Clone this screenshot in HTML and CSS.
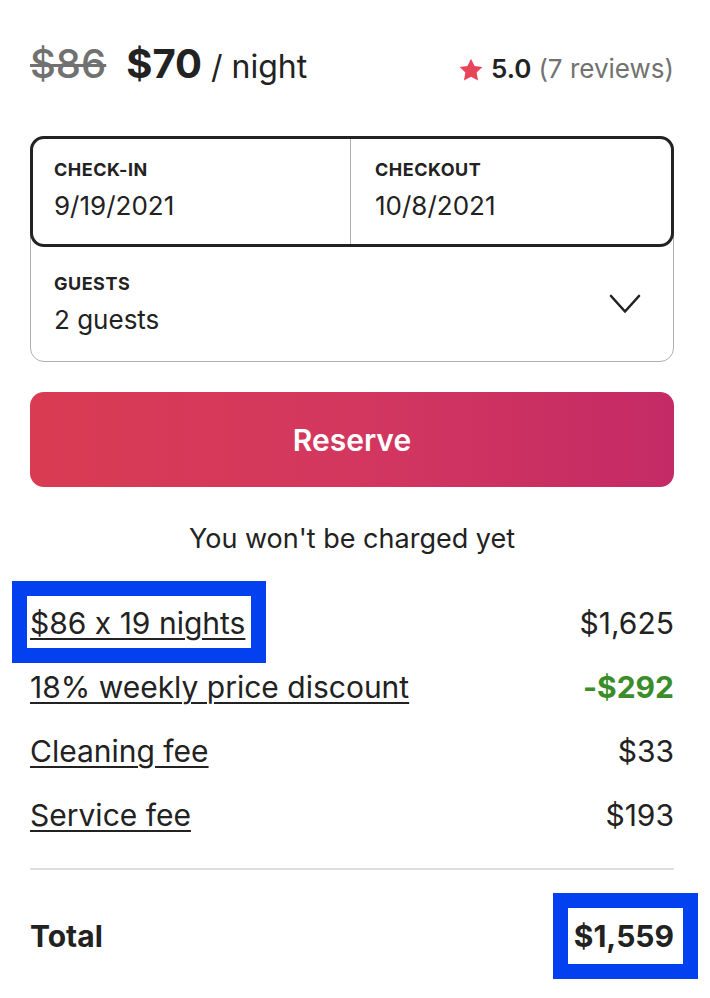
FILE: index.html
```html
<!DOCTYPE html>
<html lang="en">
<head>
<meta charset="utf-8">
<title>Booking</title>
<link rel="stylesheet" href="styles.css">
</head>
<body>
<div class="card">
  <div class="head">
    <div class="price">
      <span class="old">$86</span>
      <span class="now">$70</span>
      <span class="per">/ night</span>
    </div>
    <div class="rating">
      <svg class="star" viewBox="0 0 32 32" width="26" height="26" aria-hidden="true"><path d="M16 2l4.3 9 9.7 1.3-7.1 6.8 1.8 9.7L16 24.2l-8.7 4.6 1.8-9.7L2 12.3l9.7-1.3z" fill="#e8455a"/></svg>
      <span class="score">5.0</span>
      <span class="reviews">(7 reviews)</span>
    </div>
  </div>

  <div class="picker">
    <div class="dates">
      <div class="field">
        <div class="label">CHECK-IN</div>
        <div class="value">9/19/2021</div>
      </div>
      <div class="field field-right">
        <div class="label">CHECKOUT</div>
        <div class="value">10/8/2021</div>
      </div>
    </div>
    <div class="guests">
      <div class="field">
        <div class="label">GUESTS</div>
        <div class="value">2 guests</div>
      </div>
      <svg class="chev" viewBox="0 0 32 20" width="32" height="20" aria-hidden="true"><path d="M2 2l14 15.5L30 2" fill="none" stroke="#222" stroke-width="2.6" stroke-linecap="round" stroke-linejoin="round"/></svg>
    </div>
  </div>

  <button class="reserve">Reserve</button>
  <p class="note">You won't be charged yet</p>

  <div class="lines">
    <div class="line"><span class="lbl hl hl-a">$86 x 19 nights</span><span class="amt">$1,625</span></div>
    <div class="line"><span class="lbl">18% weekly price discount</span><span class="amt green">-$292</span></div>
    <div class="line"><span class="lbl">Cleaning fee</span><span class="amt">$33</span></div>
    <div class="line"><span class="lbl">Service fee</span><span class="amt">$193</span></div>
  </div>

  <div class="total">
    <span>Total</span>
    <span class="hl hl-b">$1,559</span>
  </div>
</div>
</body>
</html>
```

FILE: styles.css
```css
* { box-sizing: border-box; }
html, body { margin: 0; background: #fff; }
body {
  font-family: Inter, "Noto Sans", sans-serif;
  font-feature-settings: "calt" 0;
  color: #222;
  width: 710px;
}
.card {
  padding: 40px 36px 0 30px;
}
.head {
  display: flex;
  justify-content: space-between;
  align-items: baseline;
  line-height: 48px;
  height: 48px;
}
.price { display: flex; align-items: baseline; }
.old {
  font-size: 40px;
  font-weight: 500;
  color: #717171;
  text-decoration: line-through;
  text-decoration-thickness: 3px;
  margin-right: 20px;
}
.now {
  font-size: 40px;
  font-weight: 700;
  margin-right: 9px;
}
.per { font-size: 32px; font-weight: 400; }
.rating { display: flex; align-items: baseline; font-size: 26px; }
.star { align-self: center; margin-right: 7px; position: relative; top: 1px; }
.score { font-weight: 600; margin-right: 7px; }
.reviews { color: #717171; }

.picker {
  margin-top: 48px;
  border: 1px solid #b0b0b0;
  border-radius: 14px;
}
.dates {
  display: flex;
  border: 3px solid #222;
  border-radius: 14px;
  margin: -1px -1px 0 -1px;
  height: 111px;
}
.dates .field { flex: 1; padding: 20px 20px 0 21px; }
.dates .field-right { border-left: 1px solid #b0b0b0; padding-left: 24px; }
.label {
  font-size: 18px;
  font-weight: 700;
  letter-spacing: 0.5px;
  line-height: 22px;
}
.value {
  font-size: 26px;
  line-height: 32px;
  margin-top: 9px;
}
.guests {
  display: flex;
  align-items: center;
  justify-content: space-between;
  height: 114px;
  padding: 0 32px 0 23px;
}

.reserve {
  display: block;
  width: 100%;
  height: 95px;
  margin-top: 30px;
  border: 0;
  border-radius: 14px;
  background: linear-gradient(90deg, #d93b52 0%, #d3375f 50%, #c42a65 100%);
  color: #fff;
  font-family: inherit;
  font-size: 30px;
  font-weight: 600;
}
.note {
  text-align: center;
  font-size: 27px;
  margin: 37px 0 0;
  line-height: 30px;
}
.lines { margin-top: 37px; }
.line {
  display: flex;
  justify-content: space-between;
  align-items: center;
  height: 64px;
  font-size: 30px;
}
.lbl {
  text-decoration: underline;
  text-decoration-thickness: 1.5px;
  text-underline-offset: 4px;
}
.green { color: #3b8c2a; font-weight: 700; }

.total {
  margin-top: 21px;
  border-top: 2px solid #dddddd;
  display: flex;
  justify-content: space-between;
  align-items: center;
  height: 134px;
  font-size: 30px;
  font-weight: 700;
}
.hl { position: relative; }
.hl::after {
  content: "";
  position: absolute;
  border: 15px solid #0340f0;
  pointer-events: none;
}
.hl-a::after { left: -18px; right: -21px; top: -24px; bottom: -22px; }
.hl-b::after { left: -21px; right: -24px; top: -25px; bottom: -25px; }
```
